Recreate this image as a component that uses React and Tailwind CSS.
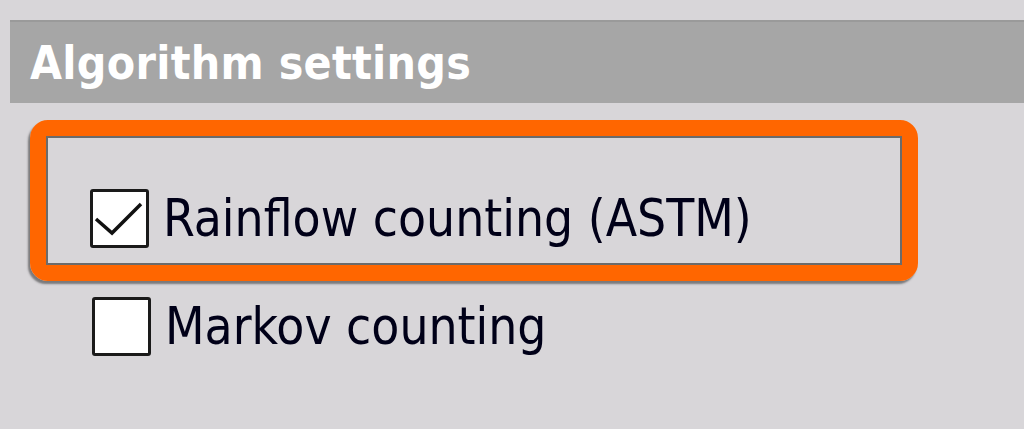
const font = { fontFamily: '"DejaVu Sans Condensed", "DejaVu Sans", sans-serif' };

const Box = ({ checked }) => (
  <div className="w-[59px] h-[59px] shrink-0 bg-white border-[3px] border-[#1a1a1a] rounded-[3px] flex items-center justify-center">
    {checked && (
      <svg viewBox="0 0 53 53" className="w-[53px] h-[53px]">
        <path d="M3 27 L19 41 L48 12" fill="none" stroke="#111" strokeWidth="3.5" strokeLinejoin="miter" />
      </svg>
    )}
  </div>
);

export default function App() {
  return (
    <div className="w-[1024px] h-[429px] overflow-hidden bg-[#d8d6d9] pt-[20px] pl-[10px]" style={font}>
      {/* Titel */}
      <div className="h-[83px] bg-[#a6a6a6] flex items-center pl-[20px] border-t-2 border-[#9a9a9a]">
        <span className="text-white font-bold text-[46px] leading-none tracking-[0.3px]">Algorithm settings</span>
      </div>

      {/* markiert */}
      <div className="mt-[17px] ml-[20px] w-[888px] h-[161px] border-[16px] border-[#ff6600] rounded-[18px] shadow-[-2px_3px_2px_rgba(60,60,60,0.6)]">
        <div className="h-full border-2 border-[#6b6b6b] flex items-end pb-[15px] pl-[42px]">
          <div className="flex items-center gap-[14px]">
            <Box checked />
            <span className="text-[#000018] text-[51px] leading-none">Rainflow counting (ASTM)</span>
          </div>
        </div>
      </div>

      <div className="mt-[16px] ml-[82px] flex items-center gap-[14px]">
        <Box />
        <span className="text-[#000018] text-[51px] leading-none">Markov counting</span>
      </div>
    </div>
  );
}
